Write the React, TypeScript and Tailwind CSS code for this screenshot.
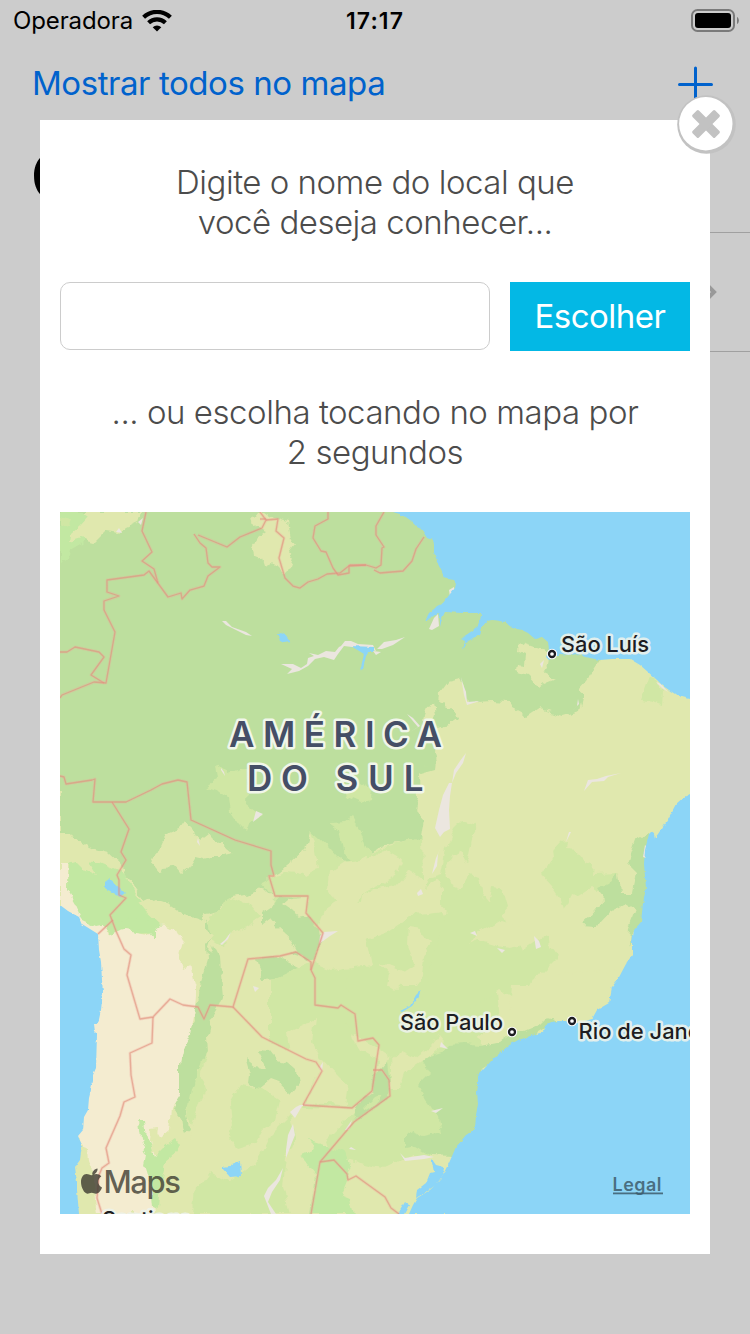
import React from "react";

const WATER = "#8cd5f7";
const FOREST = "#bddf9e";
const LIGHT = "#d0e7a4";
const FRESH = "#c2e8a2";
const YELLOW = "#e0e8ae";
const DESERT = "#f4ecd0";
const SAND = "#ebe6df";

type Shape = [fill: string, points: string];

const land: Shape[] = [
  // Amazon basin
  [FOREST, "60,512 393,505 460,512 460,600 500,612 560,640 600,660 592,672 587,680 578,690 584,695 580,711 562,716 545,710 541,706 526,716 513,709 509,702 490,701 468,703 466,692 461,678 448,681 440,692 439,705 452,709 456,718 449,724 436,727 434,752 436,763 426,765 419,774 420,798 417,812 424,820 421,838 405,842 385,845 377,849 370,857 348,862 320,852 310,832 305,850 292,862 280,872 268,878 280,905 262,888 247,895 230,897 218,912 205,915 200,918 214,930 208,950 222,975 200,985 206,950 206,922 185,915 170,905 155,900 146,904 130,880 124,873 118,862 100,852 82,846 75,840 70,832 60,832"],
  // north-west corner
  [FRESH, "60,512 105,512 95,530 82,543 70,550 68,558 60,563"],
  [LIGHT, "60,516 72,519 70,524 60,527"],
  [YELLOW, "82,512 142,512 139,522 126,528 118,534 105,532 95,542 80,538 70,541 71,534 80,526 88,517"],
  // Guiana highlands
  [YELLOW, "257,512 265,512 274,518 287,522 290,538 294,545 288,553 293,560 290,569 283,573 277,567 272,562 265,565 263,559 253,557 252,548 259,537 267,531 258,527 250,521"],
  // Maranhão
  [YELLOW, "519,641 531,645 540,648 549,655 548,666 543,673 556,679 546,683 540,688 535,683 528,675 516,671 517,665 524,666 525,653 518,650"],
  [FOREST, "439,704 452,709 456,719 449,724 436,727 430,713"],
  [YELLOW, "424,715 427,707 433,705 435,714 432,724 436,732 432,740 422,731"],
  [FOREST, "420,767 435,761 434,769 420,773"],
  // Mato Grosso
  [LIGHT, "262,884 285,872 300,873 318,868 314,843 309,831 319,840 328,848 336,857 345,862 361,855 370,858 378,850 387,846 405,842 422,837 423,880 408,870 395,885 362,893 361,903 340,900 325,910 318,930 308,940 299,910 276,902"],
  [LIGHT, "330,823 345,822 352,817 359,827 366,848 372,856 360,864 345,857 340,830"],
  [YELLOW, "290,863 298,858 303,850 311,847 315,870 304,876 292,870"],
  [YELLOW, "330,872 345,862 375,858 384,849 397,856 402,862 396,876 378,886 361,893 358,904 338,903 328,890"],
  [LIGHT, "343,790 360,783 372,790 371,800 361,803 345,796"],
  [LIGHT, "206,788 218,779 216,763 229,773 247,767 248,783 247,805 262,816 250,821 246,832 239,825 230,812 228,798 219,792"],
  [YELLOW, "152,863 165,834 180,828 185,821 190,827 197,834 200,841 209,834 214,841 222,840 226,848 233,854 224,856 213,856 205,858 196,856 190,866 180,874 173,866 163,867 160,873"],
  // Goiás and Minas
  [LIGHT, "425,890 428,878 441,874 446,848 455,828 463,820 477,824 472,835 467,860 480,890 490,903 500,910 507,930 495,940 484,955 474,962 478,968 505,944 510,935 508,958 495,975 500,1020 460,1050 400,1062 365,1040 340,1030 300,1010 310,985 345,968 372,965 367,940 388,932 412,915 441,912 443,890 435,880"],
  [YELLOW, "448,895 446,866 452,856 460,851 465,862 474,868 484,902 478,910 468,905 470,930 456,925 442,912 420,915 415,908 426,892"],
  [LIGHT, "442,877 456,886 474,893 478,904 471,915 452,917 442,905"],
  [LIGHT, "470,875 479,878 483,900 490,904 493,888 502,890 507,907 498,918 492,925 500,945 518,938 523,950 548,934 550,947 558,957 545,970 528,988 520,1002 500,990 470,1010 420,1020 430,970 446,915"],
  [YELLOW, "470,945 478,933 490,926 500,920 515,925 525,932 518,946 507,948 498,946 478,940"],
  [YELLOW, "409,926 420,928 424,938 431,944 424,957 422,975 415,985 400,985 397,975 414,964 408,945"],
  [YELLOW, "380,963 391,966 404,971 409,978 396,990 388,985 390,974"],
  [LIGHT, "552,851 560,842 566,841 565,850 576,851 585,862 594,867 593,874 620,873 612,882 603,890 598,893 590,888 578,895 572,893 568,905 564,910 560,897 552,885 543,875 553,858"],
  [FOREST, "597,888 611,882 618,874 620,893 632,893 636,873 626,863 634,840 648,833 655,850 655,880 648,925 634,930 629,946 630,928 637,910 626,903 610,912 597,926 580,925 590,916 605,898"],
  [LIGHT, "648,678 656,680 663,692 662,705 653,702 640,700"],
  // Argentina and Paraguay
  [LIGHT, "207,918 222,909 228,897 248,904 260,918 242,930 230,934 224,947 212,940"],
  [FOREST, "203,970 214,945 219,955 220,975 222,997 219,1004 211,1018 207,1037 208,1050 197,1070 194,1090 186,1112 189,1128 183,1133 181,1118 173,1108 180,1090 179,1070 183,1050 184,1040 194,1022 193,1008 200,995"],
  [LIGHT, "208,1050 200,1075 205,1090 196,1110 191,1125 186,1115 191,1090 201,1060"],
  [FOREST, "262,912 275,903 280,897 304,898 306,913 320,930 322,944 314,960 300,955 283,950 275,935 262,925"],
  [YELLOW, "262,925 270,919 278,928 292,940 298,950 286,953 276,946 262,943"],
  [YELLOW, "282,905 288,900 308,897 307,914 298,916"],
  [FOREST, "256,958 277,956 300,968 310,975 300,982 280,980 262,981"],
  [LIGHT, "270,981 310,962 330,970 350,968 345,1000 348,1030 360,1050 380,1062 373,1090 352,1108 302,1107 319,1070 300,1055 270,1042"],
  [YELLOW, "287,1033 303,1026 315,1018 312,1042 318,1055 340,1078 348,1085 345,1105 305,1103 318,1072 308,1062 290,1055"],
  [FOREST, "245,1058 255,1066 266,1068 257,1051 270,1052 276,1060 287,1062 296,1070 299,1085 291,1095 278,1083 270,1080 258,1090 249,1083 250,1075"],
  [LIGHT, "230,1102 240,1085 262,1088 280,1100 275,1120 262,1130 255,1143 238,1148 228,1138 232,1125"],
  [LIGHT, "194,1185 206,1180 212,1172 230,1182 255,1165 264,1148 270,1135 280,1125 290,1115 295,1135 286,1158 283,1185 290,1214 192,1214"],
  [LIGHT, "386,1062 400,1052 408,1062 430,1050 440,1045 470,1032 482,1040 478,1100 455,1150 420,1165 380,1168 330,1155 325,1140 350,1115 380,1098"],
  [YELLOW, "390,1065 402,1052 415,1058 432,1045 440,1035 445,1041 436,1050 420,1062 405,1072 400,1088 390,1088"],
  [FRESH, "300,1157 315,1150 309,1140 322,1144 345,1153 353,1170 346,1185 354,1214 310,1214 315,1175 305,1162"],
  [YELLOW, "352,1166 385,1168 412,1155 435,1155 455,1155 452,1175 435,1200 410,1214 380,1214 365,1205 340,1195"],
  [FOREST, "417,1085 430,1072 422,1060 432,1054 445,1050 450,1045 465,1044 480,1046 500,1042 520,1027 543,1022 548,1016 560,1020 545,1030 480,1070 480,1130 452,1156 430,1155 415,1146 404,1148 404,1135 412,1131 424,1136 441,1132 438,1118 425,1100"],
  [YELLOW, "511,985 530,985 535,975 640,970 600,1025 565,1021 549,1017 542,1024 525,1031 508,1031 512,1010 510,998"],
  // Peru, Bolivia and northern Chile
  [FRESH, "68,864 82,860 92,863 100,857 112,862 124,872 132,888 144,905 158,922 166,927 160,936 152,937 150,929 120,934 108,928 95,932 82,922 74,907 67,890"],
  [FRESH, "120,873 128,882 144,904 160,922 155,932 110,934 112,900"],
  [YELLOW, "60,833 70,833 76,841 88,848 107,853 123,868 124,874 111,868 97,862 90,857 90,865 97,876 84,870 76,862 60,865"],
  [DESERT, "60,863 67,864 67,890 76,905 83,921 96,927 106,925 110,934 125,930 148,934 154,924 168,925 178,930 183,945 180,958 185,969 192,966 196,975 194,1010 190,1035 184,1046 180,1065 180,1095 172,1108 170,1130 161,1138 155,1128 152,1144 156,1155 152,1180 156,1214 97,1214 90,1170 82,1147 70,1130 90,960 60,915"],
  [FRESH, "104,922 112,924 128,918 150,920 160,925 154,930 154,939 148,932 125,929 112,935"],
  [YELLOW, "138,903 148,898 164,908 183,916 197,920 205,929 214,935 206,945 207,960 201,980 194,985 190,965 183,968 180,958 183,944 175,927 164,922 160,925 144,910"],
  [YELLOW, "81,1147 88,1149 89,1162 94,1175 95,1214 76,1214 74,1165"],
  [FRESH, "139,1122 145,1122 147,1138 155,1156 164,1147 175,1138 180,1145 176,1152 166,1160 160,1185 158,1210 153,1208 151,1185 145,1165 147,1155 142,1145"],
  [YELLOW, "151,1128 158,1127 156,1140 156,1150 152,1152 150,1142"],
  [YELLOW, "163,1136 170,1131 175,1110 184,1132 190,1128 188,1140 172,1136 158,1148"],
  [FOREST, "355,1107 364,1098 371,1093 373,1075 382,1068 387,1062 390,1085 387,1100 370,1112 358,1118"],
  [LIGHT, "364,1108 374,1098 383,1094 378,1103 366,1111"],
];

const sea: string[] = [
  "393,512 403,515 410,520 417,527 421,529 424,533 427,538 432,540 434,544 434,552 437,562 441,570 444,577 448,579 454,580 456,583 455,588 450,594 443,603 437,606 434,609 429,613 425,621 432,617 438,613 440,618 440,627 442,618 445,612 462,613 480,613 481,617 478,625 472,631 460,639 465,641 463,650 468,641 480,635 482,627 487,621 493,620 505,622 512,628 522,630 528,633 535,639 542,637 548,642 549,650 546,657 549,660 560,654 570,655 578,654 585,657 600,660 612,659 630,659 640,665 648,672 657,680 663,686 672,692 678,696 690,699 690,512",
  "690,794 684,797 676,804 668,819 658,834 655,838 654,834 651,832 649,834 647,842 645,850 644,864 646,888 643,903 641,922 634,930 632,943 632,955 626,964 618,979 612,987 609,1003 597,1010 592,1019 582,1022 575,1022 560,1021 552,1022 546,1024 545,1029 540,1033 530,1036 525,1038 518,1040 508,1046 492,1060 484,1069 478,1075 478,1085 477,1092 478,1104 476,1115 475,1129 466,1135 456,1147 449,1163 440,1180 430,1190 417,1198 413,1205 409,1214 690,1214",
  "60,905 68,911 79,917 82,924 98,934 99,950 101,962 102,980 103,992 101,1010 98,1024 94,1024 95,1032 97,1034 96,1068 93,1075 93,1082 89,1098 88,1110 84,1117 83,1130 78,1136 82,1145 80,1160 75,1167 77,1182 77,1190 79,1214 60,1214",
  "105,882 109,879 115,884 120,888 125,893 120,897 112,892 108,890 105,888",
  "277,634 280,634 284,632 287,638 290,641 284,642 280,640",
  "351,646 374,647 374,652 367,652 363,669 360,671 364,654",
  "400,1011 410,1006 416,995 421,990 418,998 412,1006 402,1012",
  "222,1168 230,1167 232,1164 240,1161 241,1176 230,1177",
  "431,1158 436,1165 444,1167 443,1175 436,1185 424,1193 416,1198 417,1190 426,1183 430,1173 434,1172",
  "398,1214 405,1202 409,1205 404,1214",
];

const sand: string[] = [
  "222,621 226,621 232,627 246,632 252,636 246,635 238,631 226,625",
  "281,664 293,664 301,668 307,664 308,658 314,656 309,653 318,655 326,651 335,652 339,647 341,646 345,641 351,641 358,644 373,645 376,651 366,648 352,647 344,646 338,654 334,660 324,657 315,659 308,666 299,671 287,674 292,669",
  "377,649 384,642 396,640 405,637 393,645 382,649",
  "373,651 381,652 376,655",
  "434,618 438,614 439,626 432,630 429,629",
  "449,590 454,587 455,594 450,597",
  "461,677 463,684 466,692 467,702 480,701 467,705 464,695",
  "407,714 413,718 420,726 410,732 418,727",
  "449,783 452,783 450,796 449,810 450,829 444,832 440,837 435,828 439,810 443,795",
  "466,753 463,763 456,773 452,783 454,770 460,761",
  "442,845 438,854 437,866 432,874 436,858",
  "584,791 588,780 597,779 606,776 611,775 621,773 608,777 604,781 592,782",
  "320,936 324,932 338,931 330,936 319,944",
  "417,893 421,889 423,894 418,896",
  "534,936 539,941 541,947 536,949",
  "470,933 475,931 477,936",
  "497,948 505,950 502,953",
  "571,832 566,842 569,832",
  "221,768 224,772 225,776 221,770",
  "220,944 225,940 231,932 228,939 222,945",
  "253,822 256,811 263,814",
  "198,838 200,846 197,842",
  "293,1124 295,1135 291,1145 286,1158 286,1150 288,1135",
  "264,1196 268,1188 276,1180 283,1168 280,1180 272,1192 268,1202 276,1214 271,1214",
  "290,1112 296,1107 300,1105 312,1104 302,1106 295,1118",
  "319,1068 323,1062 322,1072",
  "400,1153 405,1158 424,1155 434,1157 424,1159 405,1161",
  "431,1111 443,1108 436,1113",
  "645,845 648,848 646,858 643,857",
  "656,682 661,684 668,692 662,688",
  "540,664 544,660 542,668",
  "578,699 579,704 573,710 577,706",
  "351,1147 356,1150 349,1149",
  "345,1130 352,1120 349,1130",
  "119,528 122,533 116,532",
  "138,522 143,518 141,525",
  "253,986 259,988 255,992",
  "441,1042 448,1049 440,1047",
];

const borders: string[] = [
  "146,512 142,531 152,552 142,561 154,569 158,583",
  "104,683 91,675 104,657 99,652 75,647 67,652 60,652",
  "60,698 62,695 94,682 106,683 115,632 104,610 104,601 119,596 107,592 107,580 144,575 149,571 168,597 181,593 182,599 190,590 204,586 208,576 220,567 212,567 208,563 206,548 200,543 194,534",
  "198,535 227,547 240,537 262,528 266,520 260,512",
  "266,520 278,519 276,531 284,538 279,558 285,578 293,586 300,588 308,582 318,579 327,574 340,573 350,565 366,565",
  "266,519 260,519",
  "328,512 328,519 315,526 313,538 321,551 326,552 333,568 338,575 349,573 349,566 366,565 376,568 381,565 382,548 384,547 376,535 376,526 384,512",
  "374,570 380,573 403,571 412,561 416,549 424,537",
  "60,776 64,777 66,784 92,780 95,779 93,802 126,802 151,790 162,784 178,780 187,782 191,820 235,840 271,851 271,865 274,876 269,876 275,896 308,896 306,913 323,933 313,964 311,970 315,978 315,1005 338,1008 341,1005 355,1014 358,1041 373,1038 379,1045 372,1091 352,1108 303,1105",
  "112,802 129,829 121,852 126,860 117,875 119,880 119,895 126,898 110,915 116,931 124,949 131,955 127,975 140,1019 153,1017 170,999 183,1005 198,1007 204,1019 210,1005 233,1007 248,959 280,956 296,952 311,962 311,970",
  "98,934 113,920",
  "153,1017 152,1043 130,1053 131,1075 135,1097 124,1102 120,1116 106,1148 109,1163 102,1168 99,1175 97,1198 102,1214",
  "233,1007 262,1037 306,1059 316,1062 322,1071 303,1105",
  "373,1070 382,1070 389,1080 390,1096 354,1122 320,1162 311,1214",
  "320,1162 334,1160 347,1174 348,1180 356,1176 385,1197 391,1208 399,1214",
];

function Borders() {
  return (
    <g fill="none" strokeLinejoin="round">
      {borders.map((p, i) => (
        <g key={i}>
          <polyline points={p} stroke="#f3a79c" strokeOpacity="0.3" strokeWidth="3" />
          <polyline points={p} stroke="#e0907c" strokeOpacity="0.6" strokeWidth="1.3" />
        </g>
      ))}
    </g>
  );
}

function City({ x, y }: { x: number; y: number }) {
  return (
    <>
      <circle cx={x} cy={y} r="5.200" fill="#fff" />
      <circle cx={x} cy={y} r="3" fill="#fff" stroke="#1d1d22" strokeWidth="2.300" />
    </>
  );
}

function MapView() {
  return (
    <svg viewBox="60 512 630 702" className="block h-[702px] w-[630px] shrink-0" fontFamily="Inter, 'Liberation Sans', sans-serif">
      <defs>
        <filter id="rough" x="0" y="0" width="1" height="1" colorInterpolationFilters="sRGB">
          <feTurbulence type="fractalNoise" baseFrequency="0.08" numOctaves="3" seed="4" />
          <feDisplacementMap in="SourceGraphic" scale="9" xChannelSelector="R" yChannelSelector="G" />
        </filter>
        <filter id="shore" x="0" y="0" width="1" height="1" colorInterpolationFilters="sRGB">
          <feTurbulence type="fractalNoise" baseFrequency="0.2" numOctaves="2" seed="9" />
          <feDisplacementMap in="SourceGraphic" scale="3" xChannelSelector="R" yChannelSelector="G" />
        </filter>
      </defs>
      <rect x="60" y="512" width="630" height="702" fill={YELLOW} />
      <g filter="url(#rough)">
        <rect x="40" y="492" width="670" height="742" fill={YELLOW} />
        <rect x="40" y="492" width="30" height="300" fill={FOREST} />
        <rect x="40" y="492" width="350" height="30" fill={FOREST} />
        {land.map(([fill, points], i) => (
          <polygon key={i} points={points} fill={fill} />
        ))}
      </g>
      <g fill={SAND}>
        {sand.map((points, i) => (
          <polygon key={i} points={points} />
        ))}
      </g>
      <g fill={WATER} filter="url(#shore)">
        <rect x="40" y="492" width="670" height="742" fill="none" />
        {sea.map((points, i) => (
          <polygon key={i} points={points} />
        ))}
      </g>
      <rect x="686" y="512" width="4" height="186" fill={WATER} />
      <rect x="686" y="798" width="4" height="416" fill={WATER} />
      <rect x="450" y="1210" width="240" height="4" fill={WATER} />
      <rect x="400" y="512" width="290" height="4" fill={WATER} />
      <rect x="60" y="910" width="4" height="304" fill={WATER} />
      <Borders />

      <g fill="#454e66" stroke="#f1f6ea" strokeWidth="5" strokeLinejoin="round" paintOrder="stroke" fontSize="35" fontWeight="600">
        <text x="229" y="747" textLength="213">AMÉRICA</text>
        <text x="247" y="791" textLength="61">DO</text>
        <text x="335.500" y="791" textLength="88">SUL</text>
      </g>
      <City x={552} y={654} />
      <City x={512} y={1032} />
      <City x={572} y={1021} />
      <g fill="#1d1d22" stroke="#eef3ec" strokeOpacity="0.9" strokeWidth="5" strokeLinejoin="round" paintOrder="stroke" fontSize="22" fontWeight="500">
        <text x="561" y="652" textLength="88">São Luís</text>
        <text x="400" y="1030" textLength="103">São Paulo</text>
        <text x="578.500" y="1039" textLength="149">Rio de Janeiro</text>
        <text x="102" y="1227" textLength="90">Santiago</text>
      </g>
      <g fill="#3c3a30" fillOpacity="0.8">
        <path d="M97.500 1168.500c-3 .3-5.600 3.300-5.200 6.300c2.900 0 5.600-3.200 5.200-6.300zM101.300 1176.500c-1.300-1.600-3.100-2.400-5-2.400c-2.200 0-3.200 1.100-4.800 1.100c-1.700 0-3-1.100-4.900-1.100c-3.200 0-5.600 3.300-5.600 8c0 5.500 3.300 11.600 6.400 11.600c1.600 0 2.300-1 4.300-1c2 0 2.500 1 4.300 1c2.900 0 5.200-3.700 6-6.200c-4.600-2-5-8.600-.7-11z" />
        <text x="103.500" y="1192.500" fontSize="31" fontWeight="500" textLength="77.500">Maps</text>
      </g>
      <g fill="#3d5c6c" fillOpacity="0.85">
        <text x="612.500" y="1191" fontSize="18" fontWeight="600" textLength="49">Legal</text>
        <rect x="613" y="1192.500" width="50" height="1.800" />
      </g>
    </svg>
  );
}

function StatusBar() {
  return (
    <div className="grid h-10 grid-cols-3 items-center text-black">
      <div className="flex items-center gap-[9px] pl-[13px]">
        <span className="text-[24px] leading-[42px] tracking-[-0.12px] whitespace-nowrap">Operadora</span>
        <svg viewBox="0 0 30 22" className="h-[22px] w-[30px]">
          <path d="M15 21.500l4.300-4.300a6.300 6.300 0 0 0-8.600 0z" />
          <path d="M6.600 12.700a12.200 12.200 0 0 1 16.800 0" fill="none" stroke="#000" strokeWidth="4.200" />
          <path d="M1.600 7.200a19.500 19.500 0 0 1 26.800 0" fill="none" stroke="#000" strokeWidth="4.200" />
        </svg>
      </div>
      <div className="text-center text-[23px] leading-[42px] font-semibold tracking-[1.100px]">17:17</div>
      <div className="flex justify-end pr-[11px]">
        <svg viewBox="0 0 48 24" className="h-6 w-12">
          <rect x="1" y="1" width="42" height="21" rx="5.500" fill="none" stroke="#7a7a7a" strokeWidth="2" />
          <rect x="4" y="4" width="36" height="15" rx="3" />
          <path d="M46 8c2.500 1 2.500 6 0 7z" fill="#7a7a7a" />
        </svg>
      </div>
    </div>
  );
}

export default function App() {
  return (
    <div className="relative h-[1334px] w-[750px] overflow-hidden bg-[#cccccc] font-['Inter','Liberation_Sans',sans-serif]">
      <StatusBar />
      <div className="flex h-[88px] items-center justify-between pr-[37px] pl-[32px] text-[#0062cc]">
        <span className="text-[33px] tracking-[-0.440px] whitespace-nowrap">Mostrar todos no mapa</span>
        <svg viewBox="0 0 36 36" className="h-9 w-9 text-[#0062cc]">
          <path d="M18.500 2v33M2.500 18.500h32" stroke="currentColor" strokeWidth="3" strokeLinecap="round" />
        </svg>
      </div>
      <div className="h-[104px] pt-[16px] pl-[31px] text-[66px] leading-[64px] font-bold text-black">C</div>
      <div className="ml-10 h-px bg-[#a0a0a0]" />
      <div className="ml-10 flex h-[119px] items-center justify-end border-b border-[#a0a0a0] pr-[33px]">
        <svg viewBox="0 0 12 20" className="h-5 w-3">
          <path d="M2 3l7 7L2 17" fill="none" stroke="#999" strokeWidth="4" />
        </svg>
      </div>

      <div className="absolute top-[120px] left-[40px] flex h-[1134px] w-[670px] flex-col bg-white px-5">
        <p className="mt-[42px] text-center text-[33px] leading-10 font-light tracking-[-0.480px] text-[#4c4c4c]">
          Digite o nome do local que
          <br />
          você deseja conhecer...
        </p>
        <div className="mt-10 flex h-[69px] gap-5">
          <div className="h-[68px] w-[430px] rounded-[10px] border border-[#cccccc] bg-white" />
          <button className="w-[180px] bg-[#03b8e5] text-[33px] leading-[69px] tracking-[-0.500px] text-white">Escolher</button>
        </div>
        <p className="mt-[41px] mb-[40px] text-center text-[33px] leading-10 font-light tracking-[-0.460px] text-[#4c4c4c]">
          ... ou escolha tocando no mapa por
          <br />2 segundos
        </p>
        <MapView />
      </div>

      <div className="absolute top-[95px] left-[677px] h-[59px] w-[59px]">
        <svg viewBox="0 0 59 59" className="h-full w-full">
          <circle cx="29.500" cy="29.500" r="29.300" fill="#c2c2c2" />
          <circle cx="28.800" cy="28.700" r="26.700" fill="#fff" />
          <g fill="#c2c2c2" transform="translate(29 29) rotate(45)">
            <rect x="-16" y="-4.500" width="32" height="9" rx="1.500" />
            <rect x="-4.500" y="-16" width="9" height="32" rx="1.500" />
          </g>
        </svg>
      </div>
    </div>
  );
}
